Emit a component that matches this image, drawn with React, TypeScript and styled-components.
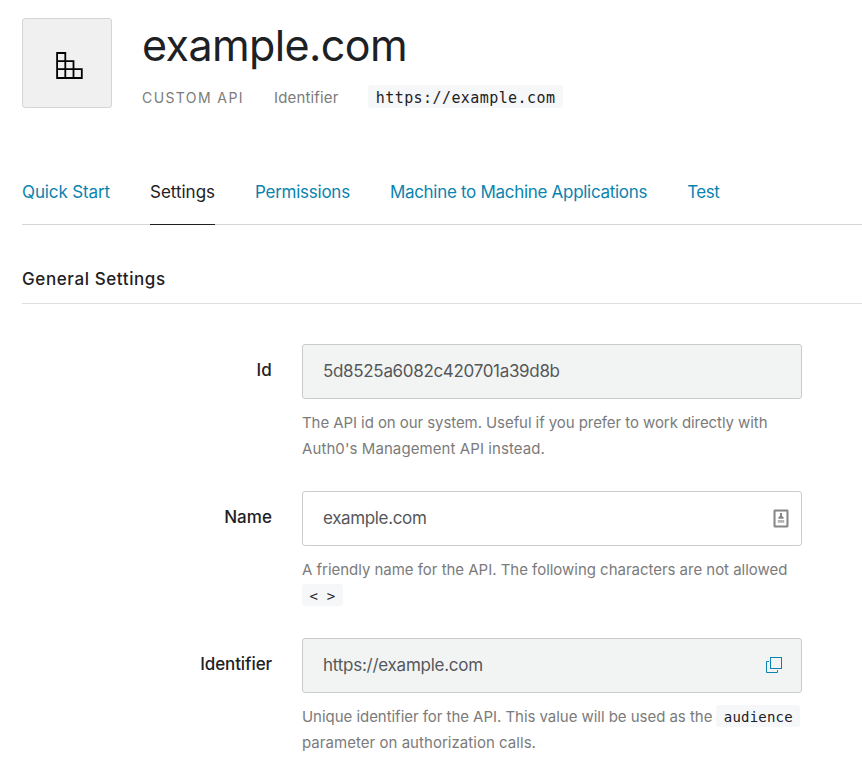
import React from "react";
import styled, { createGlobalStyle } from "styled-components";

const GlobalStyle = createGlobalStyle`
  * { box-sizing: border-box; }
  body {
    margin: 0;
    background: #fff;
    color: #1e2124;
    font-family: Inter, "Liberation Sans", sans-serif;
    overflow: hidden;
  }
`;

const Page = styled.main`
  padding: 18px 0 0 22px;
  width: 100%;
  height: 769px;
  overflow: hidden;
`;

const Header = styled.header`
  display: flex;
  gap: 30px;
  height: 90px;
`;

const LogoTile = styled.div`
  display: flex;
  flex: none;
  align-items: center;
  justify-content: center;
  width: 90px;
  height: 90px;
  background: #f0f0f0;
  border: 1px solid #d5d5d5;
  border-radius: 3px;
  padding: 5px 0 0 6px;
`;

const Heading = styled.div`
  display: flex;
  flex-direction: column;
`;

const Title = styled.h1`
  margin: 0;
  height: 67px;
  font-size: 43px;
  font-weight: 400;
  line-height: 54px;
  letter-spacing: -0.6px;
`;

const Meta = styled.div`
  display: flex;
  align-items: center;
  height: 23px;
  color: #7b7b7b;
`;

const ApiType = styled.span`
  width: 132px;
  padding-top: 2px;
  font-size: 14px;
  letter-spacing: 1.4px;
`;

const MetaLabel = styled.span`
  width: 94px;
  padding-top: 1px;
  font-size: 15px;
  letter-spacing: 0.16px;
`;

const Code = styled.code<{ $large?: boolean }>`
  display: block;
  height: ${(p) => (p.$large ? 23 : 22)}px;
  margin-top: ${(p) => (p.$large ? 0 : -2)}px;
  padding: 0 ${(p) => (p.$large ? "7.8px" : "7.5px")};
  border-radius: 3px;
  background: #f5f7f9;
  color: #1e2124;
  font-family: "DejaVu Sans Mono", monospace;
  font-size: ${(p) => (p.$large ? 15 : 14)}px;
  line-height: ${(p) => (p.$large ? 26 : 25)}px;
  letter-spacing: ${(p) => (p.$large ? 0.42 : 0.2)}px;
  white-space: pre;
`;

const Tabs = styled.nav`
  display: flex;
  gap: 40px;
  margin-top: 52px;
  height: 65px;
  border-bottom: 1px solid #d5d5d5;
`;

const Tab = styled.a<{ $active?: boolean; $tracking: number }>`
  height: 65px;
  border-bottom: 1px solid ${(p) => (p.$active ? "#1e2124" : "transparent")};
  color: ${(p) => (p.$active ? "#1e2124" : "#0a84ae")};
  font-size: 17px;
  line-height: 64px;
  letter-spacing: ${(p) => p.$tracking}px;
  white-space: nowrap;
`;

const SectionTitle = styled.h2`
  margin: 0 0 40px;
  padding-top: 39px;
  height: 79px;
  border-bottom: 1px solid #dedede;
  font-size: 17px;
  font-weight: 500;
  line-height: 30px;
  letter-spacing: 0.6px;
`;

const Field = styled.div`
  display: grid;
  grid-template-columns: 250px 500px;
  column-gap: 30px;
  height: 147px;
`;

const Label = styled.label<{ $tracking: number }>`
  text-align: right;
  font-size: 17px;
  font-weight: 500;
  line-height: 52px;
  letter-spacing: ${(p) => p.$tracking}px;
`;

const Input = styled.div<{ $readOnly?: boolean; $tracking: number }>`
  display: flex;
  align-items: center;
  justify-content: space-between;
  height: 55px;
  padding: 0 19px 2px 20px;
  border: 1px solid #c9cccd;
  border-radius: 3px;
  background: ${(p) => (p.$readOnly ? "#f2f4f4" : "#fff")};
  color: #55585a;
  font-size: 17px;
  letter-spacing: ${(p) => p.$tracking}px;
`;

const Help = styled.p`
  margin: 11px 0 0;
  color: #7b7b7b;
  font-size: 15px;
  line-height: 26px;
`;

const HelpLine = styled.span<{ $tracking: number }>`
  display: flex;
  align-items: center;
  gap: 4px;
  height: 26px;
  letter-spacing: ${(p) => p.$tracking}px;
  white-space: nowrap;
`;

const ContactSvg = styled.svg`
  display: block;
  margin: 2px -7px 0 0;
`;

const BlocksIcon = () => (
  <svg width="28" height="28" viewBox="0 0 28 28" fill="none" stroke="#000" strokeWidth="1.8">
    <path d="M1.1 1H9.3V9.1H17.5V17.2H25.8V26H1.1ZM1.1 9.1H9.3V26M1.1 17.2H17.5V26" />
  </svg>
);

const CopyIcon = () => (
  <svg width="16" height="16" viewBox="0 0 16 16" fill="none" stroke="#0a84ae">
    <rect x="4.5" y="0.5" width="11" height="11" />
    <path d="M3 4.5H0.5V15.5H11.5V13" />
  </svg>
);

const ContactIcon = () => (
  <ContactSvg width="16" height="19" viewBox="0 0 16 19">
    <rect x="0.9" y="0.9" width="14.2" height="17.2" rx="1.5" fill="none" stroke="#c0c0c0" strokeWidth="1.8" />
    <rect x="1.8" y="1.8" width="12.4" height="15.4" fill="#fff" stroke="#858585" strokeWidth="1.5" />
    <rect x="4.8" y="11" width="6.4" height="2.8" fill="#b5b5b5" />
    <path d="M5.4 9.8V8.3L7 7V4H9V7L10.6 8.3V9.8Z" fill="#858585" />
  </ContactSvg>
);

export default function App() {
  return (
    <>
      <GlobalStyle />
      <Page>
        <Header>
          <LogoTile>
            <BlocksIcon />
          </LogoTile>
          <Heading>
            <Title>example.com</Title>
            <Meta>
              <ApiType>CUSTOM API</ApiType>
              <MetaLabel>Identifier</MetaLabel>
              <Code $large>https://example.com</Code>
            </Meta>
          </Heading>
        </Header>

        <Tabs>
          <Tab $tracking={-0.12}>Quick Start</Tab>
          <Tab $active $tracking={-0.01}>Settings</Tab>
          <Tab $tracking={-0.25}>Permissions</Tab>
          <Tab $tracking={-0.3}>Machine to Machine Applications</Tab>
          <Tab $tracking={-0.5}>Test</Tab>
        </Tabs>

        <SectionTitle>General Settings</SectionTitle>

        <Field>
          <Label $tracking={0.2}>Id</Label>
          <div>
            <Input $readOnly $tracking={-0.32}>5d8525a6082c420701a39d8b</Input>
            <Help>
              <HelpLine $tracking={-0.075}>
                The API id on our system. Useful if you prefer to work directly with
              </HelpLine>
              <HelpLine $tracking={0.086}>Auth0's Management API instead.</HelpLine>
            </Help>
          </div>
        </Field>

        <Field>
          <Label $tracking={0.05}>Name</Label>
          <div>
            <Input $tracking={-0.36}>
              example.com
              <ContactIcon />
            </Input>
            <Help>
              <HelpLine $tracking={-0.025}>
                A friendly name for the API. The following characters are not allowed
              </HelpLine>
              <HelpLine $tracking={0}>
                <Code>{"< >"}</Code>
              </HelpLine>
            </Help>
          </div>
        </Field>

        <Field>
          <Label $tracking={-0.1}>Identifier</Label>
          <div>
            <Input $readOnly $tracking={-0.25}>
              https://example.com
              <CopyIcon />
            </Input>
            <Help>
              <HelpLine $tracking={-0.04}>
                Unique identifier for the API. This value will be used as the
                <Code>audience</Code>
              </HelpLine>
              <HelpLine $tracking={0.039}>parameter on authorization calls.</HelpLine>
            </Help>
          </div>
        </Field>
      </Page>
    </>
  );
}
